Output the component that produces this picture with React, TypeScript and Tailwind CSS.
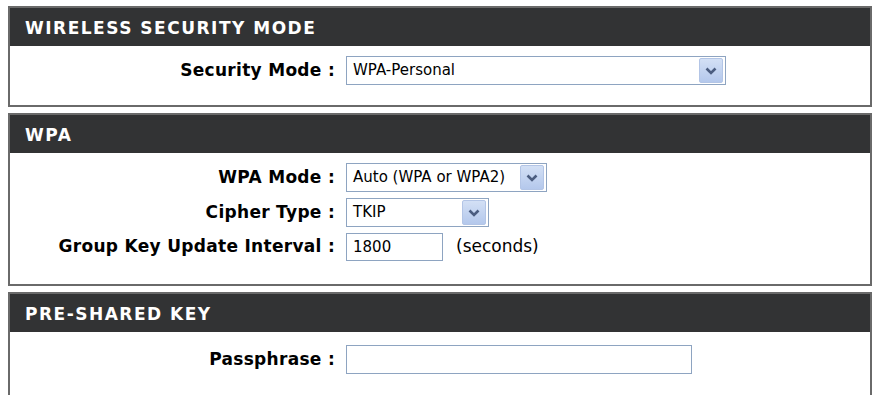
import React from "react";

const font = { fontFamily: '"DejaVu Sans", Verdana, sans-serif' };

// blue XP-style dropdown arrow button
function DropButton() {
  return (
    <div className="flex h-[25px] w-[24px] items-center justify-center rounded-[2px] border border-[#b3c5e6] bg-gradient-to-b from-[#d3e0f5] to-[#b4c8ec]">
      <svg width="12" height="8" viewBox="0 0 12 8">
        <path d="M1.5 1.5 L6 6 L10.5 1.5" fill="none" stroke="#4b5d80" strokeWidth="2.6" />
      </svg>
    </div>
  );
}

function Select({ value, width }: { value: string; width: string }) {
  return (
    <div
      className={`flex h-[29px] ${width} items-center justify-between border border-[#8ea4c1] bg-white pl-[6px] pr-[2px] text-[15px] text-black`}
    >
      <span>{value}</span>
      <DropButton />
    </div>
  );
}

function Row({ label, children }: { label: string; children: React.ReactNode }) {
  return (
    <div className="flex items-center">
      <div className="w-[325px] text-right text-[17px] font-bold tracking-[0.3px] text-black">
        {label}
      </div>
      <div className="ml-[11px] flex items-center">{children}</div>
    </div>
  );
}

function Section({
  title,
  children,
  body,
}: {
  title: string;
  children: React.ReactNode;
  body: string;
}) {
  return (
    <div className="border-2 border-[#6a6a6a]">
      <div className="flex h-[38px] items-center bg-[#323334] pl-[15px] pt-[3px] text-[17px] font-bold tracking-[1.5px] text-white">
        {title}
      </div>
      <div className={`flex flex-col gap-[6px] bg-white ${body}`}>{children}</div>
    </div>
  );
}

export default function App() {
  return (
    <div className="h-[395px] w-[876px] overflow-hidden bg-white" style={font}>
      <div className="flex flex-col gap-[6px] pl-[8px] pr-[4px] pt-[6px]">
        <Section title="WIRELESS SECURITY MODE" body="pt-[10px] pb-[20px]">
          <Row label="Security Mode :">
            <Select value="WPA-Personal" width="w-[380px]" />
          </Row>
        </Section>

        <Section title="WPA" body="pt-[10px] pb-[23px]">
          <Row label="WPA Mode :">
            <Select value="Auto (WPA or WPA2)" width="w-[201px]" />
          </Row>
          <Row label="Cipher Type :">
            <Select value="TKIP" width="w-[143px]" />
          </Row>
          <Row label="Group Key Update Interval :">
            <div className="flex h-[28px] w-[97px] items-center border border-[#8ea4c1] bg-white pl-[6px] text-[15px] text-black">
              1800
            </div>
            <span className="ml-[13px] text-[17px] text-black">(seconds)</span>
          </Row>
        </Section>

        <Section title="PRE-SHARED KEY" body="pt-[13px] pb-[30px]">
          <Row label="Passphrase :">
            <div className="h-[29px] w-[346px] border border-[#8ea4c1] bg-white" />
          </Row>
        </Section>
      </div>
    </div>
  );
}
